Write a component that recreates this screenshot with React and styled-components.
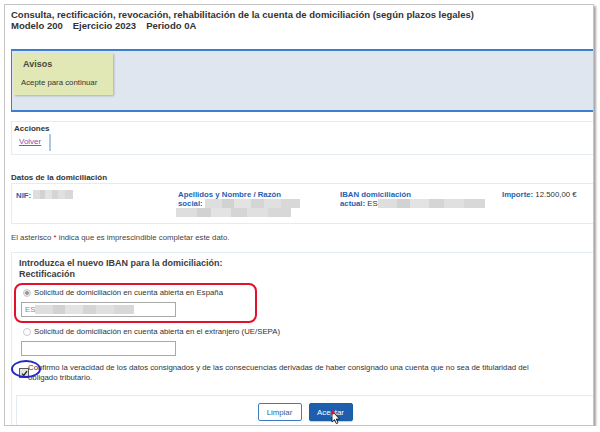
import styled, { createGlobalStyle } from "styled-components";

const Global = createGlobalStyle`
  html, body { margin: 0; padding: 0; background: #fff; }
  body { font-family: "Liberation Sans", Arial, sans-serif; color: #333; }
`;

const Window = styled.div`
  position: relative;
  margin: 4px 0 0 4px;
  width: 582px;
  height: 420px;
  border: 1px solid #c4c4c4;
  box-shadow: 2px 2px 2px rgba(0, 0, 0, 0.35);
  background: #fff;
  overflow: hidden;
  padding-left: 6px;
`;

const Title = styled.div`
  padding-top: 4px;
  font-weight: bold;
  font-size: 9.5px;
  line-height: 11px;
  color: #333;
  span { margin-right: 10px; }
`;

const Avisos = styled.div`
  margin-top: 18px;
  height: 57px;
  background: #dfe6ef;
  border-top: 2px solid #3b80cf;
  border-bottom: 2px solid #3b80cf;
  border-left: 1px solid #3b80cf;
  padding: 2px 0 0 2px;
`;

const Note = styled.div`
  width: 91px;
  height: 36px;
  background: #e1e8b6;
  box-shadow: 1px 1px 2px rgba(0, 0, 0, 0.25);
  padding: 6px 0 0 8px;
  h4 {
    margin: 0;
    font-size: 9px;
    font-weight: bold;
    color: #4a4a3a;
    line-height: 10px;
    padding-left: 1px;
  }
  p {
    margin: 9px 0 0 -1px;
    font-size: 7.8px;
    color: #333;
    line-height: 10px;
  }
`;

const Box = styled.div`
  border: 1px solid #e4ebf2;
  border-right: none;
`;

const Acciones = styled(Box)`
  margin-top: 9px;
  height: 34px;
  padding: 2px 0 0 2px;
  box-sizing: border-box;
  h5 {
    margin: 0;
    font-size: 8px;
    font-weight: bold;
    line-height: 10px;
    color: #333;
  }
`;

const ActionRow = styled.div`
  display: flex;
  align-items: stretch;
  height: 17px;
  padding-left: 5px;
`;

const Link = styled.a`
  font-size: 8px;
  color: #8c4fb3;
  text-decoration: underline;
  line-height: 15px;
  padding-right: 8px;
  border-right: 2px solid #a9c6e2;
`;

const Section = styled.div`
  margin-top: 18px;
  font-size: 8px;
  font-weight: bold;
  line-height: 10px;
  color: #333;
`;

const DataBox = styled(Box)`
  height: 41px;
  display: grid;
  grid-template-columns: 162px 162px 162px auto;
  padding: 6px 0 0 4px;
  box-sizing: border-box;
`;

const Field = styled.div`
  font-size: 7.8px;
  line-height: 9px;
  color: #333;
  b { color: #1f5fae; font-weight: bold; }
`;

const Blur = styled.span`
  display: inline-block;
  vertical-align: ${(p) => (p.$drop ? "-2px" : "-1px")};
  width: ${(p) => p.$w}px;
  height: 9px;
  background: linear-gradient(90deg, #dedede 0 18%, #d2d2d2 18% 30%, #e3e3e3 30% 48%, #d5d5d5 48% 62%, #e0e0e0 62% 80%, #d8d8d8 80% 100%);
`;

const Hint = styled.div`
  margin-top: 9px;
  font-size: 7.8px;
  line-height: 10px;
  color: #444;
  em { color: #d0021b; font-style: normal; }
`;

const FormBox = styled(Box)`
  margin-top: 9px;
  height: 200px;
  padding: 5px 0 0 1px;
  box-sizing: border-box;
`;

const FormTitle = styled.div`
  padding-left: 6px;
  font-size: 9px;
  font-weight: bold;
  line-height: 10.5px;
  color: #3c3c3c;
`;

const Choice = styled.div`
  margin: ${(p) => (p.$boxed ? "4px 0 0 1px" : "2px 0 0 1px")};
  width: ${(p) => (p.$boxed ? "243px" : "auto")};
  height: ${(p) => (p.$boxed ? "40px" : "auto")};
  border: 2px solid ${(p) => (p.$boxed ? "#e3102a" : "transparent")};
  border-radius: 8px;
  box-sizing: border-box;
  padding: ${(p) => (p.$boxed ? "3px 0 0 5px" : "0 0 0 5px")};
`;

const RadioRow = styled.label`
  display: flex;
  align-items: center;
  gap: 3px;
  font-size: 7.8px;
  line-height: 10px;
  color: #333;
  padding-left: 2px;
  white-space: nowrap;
`;

const Radio = styled.span`
  width: 6px;
  height: 6px;
  border-radius: 50%;
  border: 1px solid #c9c9c9;
  background: ${(p) => (p.$on ? "radial-gradient(circle, #9a9a9a 0 40%, #e9e9e9 45%)" : "#fff")};
`;

const TextInput = styled.div`
  margin-top: 4px;
  width: 155px;
  height: 15px;
  border: 1px solid #a9a9a9;
  box-sizing: border-box;
  font-size: 7.8px;
  line-height: 13px;
  padding-left: 3px;
  color: #888;
  display: flex;
  align-items: center;
`;

const CheckRow = styled.div`
  position: relative;
  margin: 5px 0 0 6px;
  display: flex;
  align-items: flex-start;
  font-size: 7.8px;
  line-height: 9.5px;
  color: #333;
  p { margin: 0 0 0 -1px; width: 510px; }
`;

const Check = styled.span`
  flex: none;
  margin-top: 5px;
  width: 8px;
  height: 8px;
  border: 1px solid #5a5a5a;
  background: #e4e4e4;
  display: flex;
  align-items: center;
  justify-content: center;
`;

const Ring = styled.span`
  position: absolute;
  left: -8px;
  top: -3px;
  width: 26px;
  height: 14px;
  border: 2px solid #2326c9;
  border-radius: 50%;
`;

const ButtonBar = styled(Box)`
  margin: 13px 0 0 3px;
  height: 40px;
  display: flex;
  justify-content: center;
  gap: 7px;
  padding-top: 7px;
  box-sizing: border-box;
`;

const Button = styled.button`
  position: relative;
  height: 18px;
  width: 44px;
  padding: 0;
  border-radius: 2px;
  font-family: inherit;
  font-size: 7.8px;
  border: 1px solid ${(p) => (p.$primary ? "#1b5ca6" : "#3d7cc0")};
  background: ${(p) => (p.$primary ? "#1d5fad" : "#fff")};
  color: ${(p) => (p.$primary ? "#fff" : "#2d5f99")};
  box-shadow: ${(p) => (p.$primary ? "0 1px 1px rgba(0,0,0,0.2)" : "none")};
`;

const Pointer = styled.svg`
  position: absolute;
  left: 21px;
  top: 6px;
`;

export default function App() {
  return (
    <>
      <Global />
      <Window>
        <Title>
          <div>Consulta, rectificación, revocación, rehabilitación de la cuenta de domiciliación (según plazos legales)</div>
          <div>
            <span>Modelo 200</span>
            <span>Ejercicio 2023</span>
            <span>Periodo 0A</span>
          </div>
        </Title>

        <Avisos>
          <Note>
            <h4>Avisos</h4>
            <p>Acepte para continuar</p>
          </Note>
        </Avisos>

        <Acciones>
          <h5>Acciones</h5>
          <ActionRow>
            <Link>Volver</Link>
          </ActionRow>
        </Acciones>

        <Section>Datos de la domiciliación</Section>
        <DataBox>
          <Field>
            <b>NIF:</b> <Blur $w={40} />
          </Field>
          <Field>
            <b>Apellidos y Nombre / Razón</b>
            <br />
            <b>social:</b> <Blur $w={95} $drop />
            <br />
            <Blur $w={115} $drop style={{ marginLeft: -2 }} />
          </Field>
          <Field>
            <b>IBAN domiciliación</b>
            <br />
            <b>actual:</b> ES<Blur $w={107} $drop />
          </Field>
          <Field>
            <b>Importe:</b> 12.500,00 €
          </Field>
        </DataBox>

        <Hint>
          El asterisco <em>*</em> indica que es imprescindible completar este dato.
        </Hint>

        <FormBox>
          <FormTitle>
            Introduzca el nuevo IBAN para la domiciliación:
            <br />
            Rectificación
          </FormTitle>
          <Choice $boxed>
            <RadioRow>
              <Radio $on />
              Solicitud de domiciliación en cuenta abierta en España
            </RadioRow>
            <TextInput>
              ES<Blur $w={99} />
            </TextInput>
          </Choice>
          <Choice>
            <RadioRow>
              <Radio />
              Solicitud de domiciliación en cuenta abierta en el extranjero (UE/SEPA)
            </RadioRow>
            <TextInput />
          </Choice>
          <CheckRow>
            <Check>
              <svg width="7" height="7" viewBox="0 0 7 7">
                <path d="M1 3.6 L2.8 5.4 L6 1.2" fill="none" stroke="#222" strokeWidth="1.3" />
              </svg>
            </Check>
            <Ring />
            <p>
              Confirmo la veracidad de los datos consignados y de las consecuencias derivadas de haber consignado una cuenta que no sea de titularidad del obligado tributario.
            </p>
          </CheckRow>
          <ButtonBar>
            <Button>Limpiar</Button>
            <Button $primary>
              Aceptar
              <Pointer width="10" height="15" viewBox="0 0 10 15">
                <path d="M1 1 L1 12 L3.5 9.6 L5.3 13.6 L7 12.8 L5.3 9 L8.6 9 Z" fill="#fff" stroke="#111" strokeWidth="0.9" />
                <circle cx="1.5" cy="2.5" r="2" fill="#e4141f" />
              </Pointer>
            </Button>
          </ButtonBar>
        </FormBox>
      </Window>
    </>
  );
}
